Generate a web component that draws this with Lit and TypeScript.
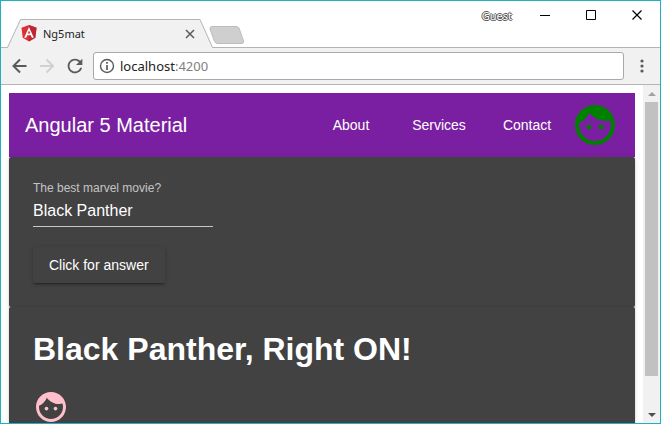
import { LitElement, html, css } from "lit";
import { customElement, property, state } from "lit/decorators.js";

@customElement("face-icon")
class FaceIcon extends LitElement {
  static styles = css`
    :host { display: block; }
    svg { display: block; width: 100%; height: 100%; fill: currentColor; }
  `;
  render() {
    return html`<svg viewBox="0 0 24 24" aria-hidden="true"><path d="M9 11.75c-.69 0-1.25.56-1.25 1.25s.56 1.25 1.25 1.25 1.25-.56 1.25-1.25-.56-1.25-1.25-1.25zm6 0c-.69 0-1.25.56-1.25 1.25s.56 1.25 1.25 1.25 1.25-.56 1.25-1.25-.56-1.25-1.25-1.25zM12 2C6.48 2 2 6.48 2 12s4.480 10 10 10 10-4.480 10-10S17.520 2 12 2zm0 18c-4.410 0-8-3.590-8-8 0-.29.02-.58.05-.86 2.360-1.050 4.230-2.980 5.210-5.370C11.070 8.330 14.050 10 17.420 10c.78 0 1.530-.09 2.250-.26.21.71.33 1.470.33 2.260 0 4.410-3.590 8-8 8z"/></svg>`;
  }
}

@customElement("browser-chrome")
class BrowserChrome extends LitElement {
  @property() address = "localhost";
  @property() port = ":4200";

  static styles = css`
    :host { display: block; font-family: "Noto Sans", "Open Sans", sans-serif; color: #222; }
    * { box-sizing: border-box; }
    button { border: 0; padding: 0; background: none; display: grid; place-items: center; }
    svg { display: block; }
    .titlebar { display: flex; height: 46px; background: #fff; }
    .tabs { display: flex; align-items: flex-end; padding-left: 5px; flex: 1; }
    .tab { position: relative; width: 208px; height: 29px; margin-bottom: -1px; display: flex; align-items: center; padding: 0 18px 0 15px; gap: 6px; }
    .shape { position: absolute; left: 0; top: 0; }
    .logo { position: relative; }
    .name { position: relative; flex: 1; font-size: 11px; line-height: 16px; }
    .close { position: relative; width: 12px; height: 16px; }
    .new { width: 36px; height: 19px; margin: 0 0 3px -5px; }
    .controls { display: flex; height: 28px; align-items: center; }
    .guest { font-size: 11px; line-height: 16px; color: #fff; margin: 2px 10px 0 0; text-shadow: 1px 0 #555, -1px 0 #555, 0 1px #555, 0 -1px #555; }
    .control { width: 46px; height: 28px; }
    .bar { display: flex; align-items: center; height: 38px; background: #f1f1f1; border-top: 1px solid #b4b4b4; border-bottom: 1px solid #b4b4b4; padding: 0 8px 0 4px; }
    .nav { width: 28px; height: 28px; flex: none; }
    .omni { flex: 1; display: flex; align-items: center; gap: 5px; height: 28px; margin: 0 8px 0 4px; padding-left: 5px; background: #fff; border: 1px solid #a9a9a9; border-radius: 3px; font-size: 13px; line-height: 20px; }
    .port { color: #808080; }
    .more { width: 20px; height: 28px; }
  `;

  render() {
    return html`
      <div class="titlebar">
        <div class="tabs">
          <div class="tab">
            <svg class="shape" width="208" height="29"><path d="M0 29V28.500H1.500L14.500.5H194L206.500 28.500H208V29Z" fill="#f1f1f1"/><path d="M0 28.500H1.500L14.500.5H194L206.500 28.500H208" fill="none" stroke="#b4b4b4"/></svg>
            <svg class="logo" width="16" height="17" viewBox="0 0 16 17"><path fill="#dd3036" d="M8 0 15.500 2.700 14.300 12.800 8 16.500 1.700 12.800.5 2.700z"/><path fill="#bd2733" d="M8 0 15.500 2.700 14.300 12.800 8 16.500z"/><path fill="#fff" fill-rule="evenodd" d="M8 2 3.200 12.700H5.200L6.200 10.300H9.800L10.800 12.700H12.800ZM8 5.500 9.300 8.600H6.700Z"/></svg>
            <span class="name">Ng5mat</span>
            <button class="close" aria-label="Close tab"><svg width="10" height="10"><path d="M1 1 9 9M9 1 1 9" stroke="#5a5a5a" stroke-width="1.500"/></svg></button>
          </div>
          <button class="new" aria-label="New tab"><svg width="36" height="18"><path d="M3 .5H27Q29 .5 30 2L34.500 15Q35 17.500 33 17.500H8.500Q6.500 17.500 5.500 15.500L1 3Q.5.5 3 .5Z" fill="#cfcfcf" stroke="#bdbdbd"/></svg></button>
        </div>
        <div class="controls">
          <span class="guest">Guest</span>
          <button class="control" aria-label="Minimise"><svg width="10" height="10"><path d="M0 5.500H10" stroke="#000"/></svg></button>
          <button class="control" aria-label="Maximise"><svg width="10" height="10"><path d="M.5.5H9.500V9.500H.5Z" fill="none" stroke="#000"/></svg></button>
          <button class="control" aria-label="Close window"><svg width="10" height="10"><path d="M.5.5 9.500 9.500M9.500.5.5 9.500" stroke="#000" stroke-width="1.200"/></svg></button>
        </div>
      </div>
      <div class="bar">
        <button class="nav" aria-label="Back"><svg width="24" height="20" viewBox="0 0 24 20"><path d="M19.500 10H7M13 3.500 6.500 10 13 16.500" fill="none" stroke="#5a5a5a" stroke-width="2"/></svg></button>
        <button class="nav" aria-label="Forward" disabled><svg width="24" height="20" viewBox="0 0 24 20"><path d="M5 10H17.500M11.500 3.500 18 10 11.500 16.500" fill="none" stroke="#d0d0d0" stroke-width="2"/></svg></button>
        <button class="nav" aria-label="Reload"><svg width="22" height="22" viewBox="0 0 24 24"><path fill="#5a5a5a" d="M17.650 6.350C16.200 4.900 14.210 4 12 4c-4.420 0-7.990 3.580-7.990 8s3.570 8 7.990 8c3.730 0 6.840-2.550 7.730-6h-2.080c-.82 2.330-3.040 4-5.650 4-3.310 0-6-2.690-6-6s2.690-6 6-6c1.660 0 3.140.69 4.220 1.780L13 11h7V4l-2.350 2.350z"/></svg></button>
        <div class="omni">
          <svg width="16" height="16"><circle cx="8" cy="8" r="6.500" fill="none" stroke="#5a5a5a" stroke-width="1.400"/><path d="M8 7V12M8 4V5.700" stroke="#5a5a5a" stroke-width="1.700"/></svg>
          <span>${this.address}<span class="port">${this.port}</span></span>
        </div>
        <button class="more" aria-label="Menu"><svg width="4" height="14" fill="#5a5a5a"><circle cx="2" cy="2" r="1.600"/><circle cx="2" cy="7" r="1.600"/><circle cx="2" cy="12" r="1.600"/></svg></button>
      </div>`;
  }
}

@customElement("app-root")
class AppRoot extends LitElement {
  @state() movie = "Black Panther";
  @state() answer = "Black Panther, Right ON!";

  static styles = css`
    :host { display: block; height: 100vh; font-family: "Liberation Sans", Arial, sans-serif; }
    * { box-sizing: border-box; }
    .window { height: 100%; display: flex; flex-direction: column; border: 1px solid #1fb0c4; overflow: hidden; background: #fff; }
    .view { flex: 1; min-height: 0; display: flex; }
    .page { flex: 1; min-width: 0; overflow: hidden; padding: 8px; }
    .toolbar { display: flex; align-items: center; height: 64px; padding: 0 16px; background: #7b1fa2; color: #fff; }
    .title { flex: 1; font-size: 20px; line-height: 32px; }
    .link { width: 88px; text-align: center; font-size: 14px; line-height: 36px; font-weight: 500; color: #fff; text-decoration: none; }
    .avatar { width: 48px; height: 48px; color: green; }
    .card { padding: 24px; background: #424242; color: #fff; border-radius: 2px; box-shadow: 0 3px 1px -2px rgba(0,0,0,.2), 0 2px 2px 0 rgba(0,0,0,.14), 0 1px 5px 0 rgba(0,0,0,.12); }
    .field { width: 180px; display: flex; flex-direction: column; margin-bottom: 20px; }
    .label { font-size: 12px; line-height: 14px; color: rgba(255,255,255,.7); }
    .input { width: 100%; height: 32px; padding: 0; border: 0; border-bottom: 1px solid rgba(255,255,255,.7); border-radius: 0; outline: 0; background: none; color: #fff; font: 16px "Liberation Sans", Arial, sans-serif; }
    .answer { display: block; height: 36px; padding: 0 16px; border: 0; border-radius: 2px; background: #424242; color: #fff; font: 500 14px "Liberation Sans", Arial, sans-serif; box-shadow: 0 3px 1px -2px rgba(0,0,0,.2), 0 2px 2px 0 rgba(0,0,0,.14), 0 1px 5px 0 rgba(0,0,0,.12); }
    .heading { margin: 0 0 21px; font-size: 32px; line-height: 37px; font-weight: 700; }
    .fan { width: 36px; height: 36px; color: pink; }
    .scroll { width: 17px; display: flex; flex-direction: column; background: #f1f1f1; }
    .arrow { height: 17px; border: 0; padding: 0; background: none; display: grid; place-items: center; }
    .track { flex: 1; display: flex; flex-direction: column; padding: 0 2px; }
    .thumb { flex: 9; background: #c1c1c1; }
    .rest { flex: 1; }
  `;

  render() {
    return html`
      <div class="window">
        <browser-chrome></browser-chrome>
        <div class="view">
          <main class="page">
            <nav class="toolbar">
              <span class="title">Angular 5 Material</span>
              ${["About", "Services", "Contact"].map((t) => html`<a class="link" href="#">${t}</a>`)}
              <face-icon class="avatar"></face-icon>
            </nav>
            <section class="card">
              <div class="field">
                <label class="label" for="movie">The best marvel movie?</label>
                <input class="input" id="movie" .value=${this.movie}
                  @input=${(e: Event) => (this.movie = (e.target as HTMLInputElement).value)} />
              </div>
              <button class="answer" @click=${() => (this.answer = this.movie === "Black Panther" ? "Black Panther, Right ON!" : this.movie)}>Click for answer</button>
            </section>
            <section class="card">
              <h1 class="heading">${this.answer}</h1>
              <face-icon class="fan"></face-icon>
            </section>
          </main>
          <div class="scroll">
            <button class="arrow" aria-label="Scroll up"><svg width="8" height="4"><path d="M4 0 8 4H0Z" fill="#a3a3a3"/></svg></button>
            <div class="track"><div class="thumb"></div><div class="rest"></div></div>
            <button class="arrow" aria-label="Scroll down"><svg width="8" height="4"><path d="M4 4 8 0H0Z" fill="#505050"/></svg></button>
          </div>
        </div>
      </div>`;
  }
}
